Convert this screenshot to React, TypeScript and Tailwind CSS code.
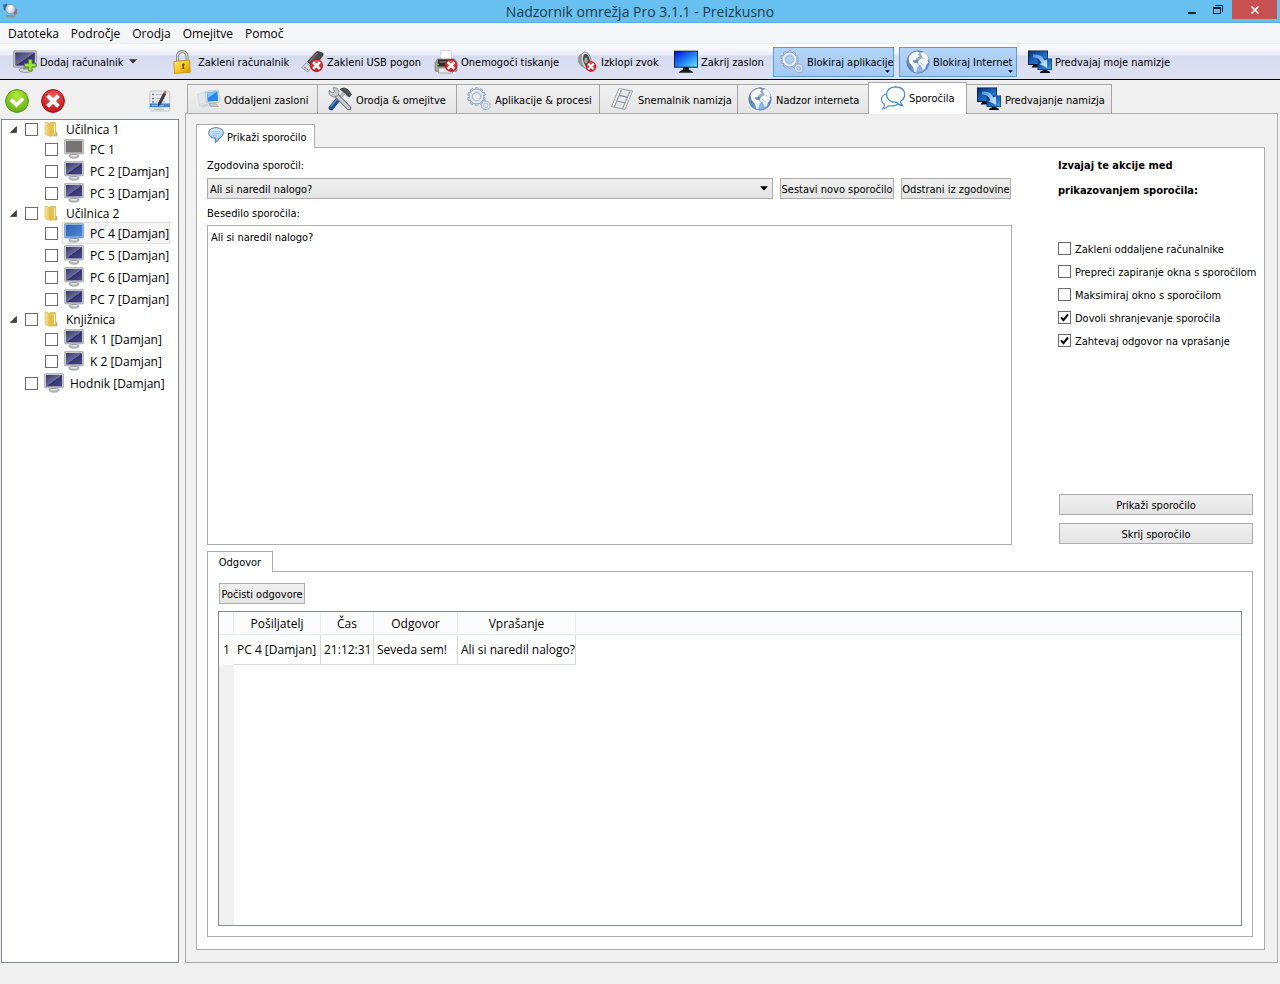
import React from "react";

const UI = "font-['DejaVu_Sans_Condensed','Noto_Sans',sans-serif]";

type IconProps = { className?: string };

function Defs() {
  return (
    <svg className="absolute h-0 w-0" aria-hidden="true">
      <defs>
        <linearGradient id="screenNavy" x1="0" y1="0" x2="1" y2="1">
          <stop offset="0" stopColor="#3b3a66" />
          <stop offset=".5" stopColor="#6a6a9c" />
          <stop offset=".52" stopColor="#34336a" />
          <stop offset="1" stopColor="#4b4a8c" />
        </linearGradient>
        <linearGradient id="screenBlue" x1="0" y1="0" x2="1" y2="1">
          <stop offset="0" stopColor="#2f5fb4" />
          <stop offset="1" stopColor="#4f8ad6" />
        </linearGradient>
        <linearGradient id="screenBright" x1="0" y1="0" x2="1" y2="1">
          <stop offset="0" stopColor="#0410d8" />
          <stop offset=".5" stopColor="#1f7cf4" />
          <stop offset="1" stopColor="#5fe6ff" />
        </linearGradient>
        <linearGradient id="screenDeep" x1="0" y1="0" x2="1" y2="1">
          <stop offset="0" stopColor="#0a2f70" />
          <stop offset=".6" stopColor="#1f6fc8" />
          <stop offset="1" stopColor="#4aa6ee" />
        </linearGradient>
        <linearGradient id="arrowGlow" x1="0" y1="0" x2="1" y2="1">
          <stop offset="0" stopColor="#4d95dd" />
          <stop offset="1" stopColor="#d4edff" />
        </linearGradient>
        <linearGradient id="folder" x1="0" y1="0" x2="1" y2="0">
          <stop offset="0" stopColor="#f8e9a0" />
          <stop offset="1" stopColor="#dfb93c" />
        </linearGradient>
        <linearGradient id="gold" x1="0" y1="0" x2="1" y2="1">
          <stop offset="0" stopColor="#ffe98a" />
          <stop offset=".5" stopColor="#fbc81e" />
          <stop offset="1" stopColor="#d98f00" />
        </linearGradient>
        <radialGradient id="redBall" cx=".5" cy=".3" r=".75">
          <stop offset="0" stopColor="#f25a5a" />
          <stop offset="1" stopColor="#b80f14" />
        </radialGradient>
        <radialGradient id="greenBall" cx=".5" cy=".3" r=".75">
          <stop offset="0" stopColor="#b4e83e" />
          <stop offset="1" stopColor="#5fae10" />
        </radialGradient>
        <radialGradient id="globe" cx=".55" cy=".85" r=".9">
          <stop offset="0" stopColor="#8fc0f0" />
          <stop offset=".5" stopColor="#5585bd" />
          <stop offset="1" stopColor="#76879f" />
        </radialGradient>
        <linearGradient id="land" x1="0" y1="0" x2="1" y2="1">
          <stop offset="0" stopColor="#dfe3e9" />
          <stop offset=".5" stopColor="#ffffff" />
          <stop offset="1" stopColor="#c8dcf2" />
        </linearGradient>
        <linearGradient id="bubble" x1="0" y1="0" x2="0" y2="1">
          <stop offset="0" stopColor="#eaf4ff" />
          <stop offset="1" stopColor="#8dbcf0" />
        </linearGradient>
      </defs>
    </svg>
  );
}

function Monitor({ className, tone = "navy" }: IconProps & { tone?: "navy" | "gray" | "blue" }) {
  const fill = tone === "gray" ? "#767370" : tone === "blue" ? "url(#screenBlue)" : "url(#screenNavy)";
  return (
    <svg className={className} viewBox="0 0 20 20" aria-hidden="true">
      <ellipse cx="10" cy="17" rx="5" ry="2.2" fill="#b9bcbc" stroke="#8b9090" strokeWidth=".6" />
      <ellipse cx="10" cy="16.4" rx="3" ry="1" fill="#e8eaea" />
      <path d="M8 13h4v3H8z" fill="#8b9292" />
      <rect x=".5" y=".5" width="19" height="14.4" rx="1" fill={tone === "blue" ? "#8fb2dd" : "#c4c6ca"} stroke={tone === "blue" ? "#6f98cc" : "#a5a8ac"} strokeWidth=".7" />
      <rect x="2" y="2" width="16" height="11.4" fill={fill} />
    </svg>
  );
}

function RedX({ x, y, r }: { x: number; y: number; r: number }) {
  const k = r * 0.4;
  return (
    <g>
      <circle cx={x} cy={y} r={r} fill="url(#redBall)" stroke="#a01216" strokeWidth=".6" />
      <path d={`M${x - k} ${y - k}L${x + k} ${y + k}M${x + k} ${y - k}L${x - k} ${y + k}`} stroke="#fff" strokeWidth={r * 0.42} strokeLinecap="square" />
    </g>
  );
}

function AddMonitor({ className }: IconProps) {
  return (
    <svg className={className} viewBox="0 0 24 24" aria-hidden="true">
      <ellipse cx="13" cy="20" rx="7" ry="2.4" fill="#d5d8da" stroke="#7d8486" strokeWidth=".8" />
      <rect x="10" y="16" width="5" height="3.5" fill="#868d90" />
      <rect x=".6" y=".8" width="22.8" height="16.4" rx="1" fill="#c6c9ce" stroke="#8d9196" strokeWidth=".8" />
      <rect x="2.2" y="2.4" width="19.600" height="13.2" fill="url(#screenNavy)" />
      <path d="M15.600 9.500h3.400v4h4v3.400h-4v4h-3.400v-4h-4v-3.400h4z" fill="#9fe03a" stroke="#4c8c10" strokeWidth=".8" />
    </svg>
  );
}

function Padlock({ className }: IconProps) {
  return (
    <svg className={className} viewBox="0 0 24 24" aria-hidden="true">
      <path d="M6.500 12V6.500a4.800 4.800 0 0 1 9.600-.3V12" fill="none" stroke="#7e7e78" strokeWidth="3" />
      <path d="M6.500 12V6.500a4.800 4.800 0 0 1 9.600-.3V12" fill="none" stroke="#dededa" strokeWidth="1.300" />
      <path d="M2.800 11.500L18.500 10l.8 12.300-15.700 1.100z" fill="url(#gold)" stroke="#c08a10" strokeWidth=".8" />
      <circle cx="12.300" cy="14.800" r="1.300" fill="#6a4700" />
      <path d="M11.700 15.500h1.200l.3 3.500h-1.800z" fill="#6a4700" />
    </svg>
  );
}

function UsbBlock({ className }: IconProps) {
  return (
    <svg className={className} viewBox="0 0 24 24" aria-hidden="true">
      <path d="M7.500 11.500L16 2.200q1-1 2.500-.6l3.800 1.200q1.400.8.7 2.500L13.500 18z" fill="#4a4a4d" stroke="#222" strokeWidth=".6" />
      <path d="M9 12l8.500-9" stroke="#77777b" strokeWidth="1.200" />
      <path d="M6.200 12.800l5.600 4.500-4 4.600-6-4.200z" fill="#d9dcde" stroke="#86898c" strokeWidth=".8" />
      <path d="M4.300 17l1.500 1.100M6.700 18.800l1.200.9" stroke="#555" strokeWidth="1" />
      <RedX x={16.500} y={15.500} r={6.200} />
    </svg>
  );
}

function PrinterBlock({ className }: IconProps) {
  return (
    <svg className={className} viewBox="0 0 24 24" aria-hidden="true">
      <path d="M7 .5h10l.6 9H6.400z" fill="#fff" stroke="#c2c2c2" strokeWidth=".7" />
      <path d="M3.500 9h17L23 12.500V20q0 1.500-1.500 1.500H2.500Q1 21.500 1 20v-7.500z" fill="#a3a5a2" stroke="#666" strokeWidth=".6" />
      <path d="M4 9.500h16v7H3.500z" fill="#2e2e2e" />
      <path d="M5.500 12h11" stroke="#888" strokeWidth="1.200" />
      <path d="M4.500 18h14v5h-14z" fill="#e8e8e8" stroke="#777" strokeWidth=".6" />
      <path d="M2 14.500h3" stroke="#89c42f" strokeWidth="1.200" />
      <RedX x={17} y={15.500} r={6} />
    </svg>
  );
}

function SpeakerBlock({ className }: IconProps) {
  return (
    <svg className={className} viewBox="0 0 24 24" aria-hidden="true">
      <path d="M10 2.500L5.500 5.500Q2.500 11 7 15.500L13 19z" fill="#9a9a9a" stroke="#707070" strokeWidth=".6" />
      <ellipse cx="12.200" cy="10.500" rx="5" ry="8.600" transform="rotate(-12 12 10.500)" fill="#d4d4d4" stroke="#8c8c8c" strokeWidth=".8" />
      <ellipse cx="12.600" cy="10.500" rx="3.400" ry="6.500" transform="rotate(-12 12 10.500)" fill="#4a4a4d" />
      <ellipse cx="12" cy="10.500" rx="1.700" ry="3" fill="#a5a5a9" />
      <RedX x={17} y={16.500} r={5} />
    </svg>
  );
}

function BrightMonitor({ className }: IconProps) {
  return (
    <svg className={className} viewBox="0 0 24 24" aria-hidden="true">
      <path d="M9.500 17h5l.7 2.500 3.800 2.500v.7H5v-.7l3.800-2.500z" fill="#1b1b1f" />
      <rect x="0" y=".7" width="24" height="17" fill="#16161c" />
      <rect x=".8" y="1.500" width="22.400" height="15.200" fill="url(#screenBright)" />
    </svg>
  );
}

function Cog({ x, y, r }: { x: number; y: number; r: number }) {
  const teeth = Array.from({ length: 10 }, (_, i) => i * 36);
  return (
    <g transform={`translate(${x} ${y}) scale(${r / 8})`}>
      <g fill="#dfe8f1" stroke="#8aa0b8" strokeWidth=".9">
        {teeth.map((a) => (
          <rect key={a} x="-1.300" y="-8.300" width="2.600" height="3.500" rx=".6" transform={`rotate(${a})`} />
        ))}
      </g>
      <circle r="5.300" fill="none" stroke="#8aa0b8" strokeWidth="3.800" />
      <circle r="5.300" fill="none" stroke="#e3ebf3" strokeWidth="2.600" />
      <circle r="4.300" fill="none" stroke="#b7c6d6" strokeWidth=".8" />
    </g>
  );
}

function Gears({ className }: IconProps) {
  return (
    <svg className={className} viewBox="0 0 24 24" aria-hidden="true">
      <Cog x={9.500} y={9.500} r={8.500} />
      <Cog x={18.800} y={18.300} r={4.600} />
    </svg>
  );
}

function Globe({ className }: IconProps) {
  return (
    <svg className={className} viewBox="0 0 24 24" aria-hidden="true">
      <circle cx="12" cy="12" r="11.200" fill="url(#globe)" stroke="#6b7c96" strokeWidth=".7" />
      <path d="M2.500 8Q5 2.500 11 1.500l2.500 1-1.500 2 1.500 2-3 1.500-.5 2-3 .5.500 2 3.500.500 2 2.500-2 3-.500 4-2-.500-1.500-5-3.500-4z" fill="url(#land)" />
      <path d="M14.500 3l3-1q4 2.200 5.300 7l-1.300 1 1 2.500-2.500 3-1 3.500-2.500 1-1.500-4.500-2.500-1-.500-3 2-2.500 2.500-.500-.500-2z" fill="url(#land)" />
      <path d="M14 12q1.500 2.500 4 3M16 7l3.500 2.500" stroke="#a5c2e2" strokeWidth=".9" fill="none" />
      <ellipse cx="11" cy="6" rx="8" ry="4.300" fill="#fff" fillOpacity=".3" />
    </svg>
  );
}

function DualScreens({ className }: IconProps) {
  return (
    <svg className={className} viewBox="0 0 24 24" aria-hidden="true">
      <path d="M6 14h4v3.500H3.500zM15 19h4l.5 1.800 2.500 1V23H12v-1.200l2.500-1z" fill="#0c0f18" />
      <rect x="0" y=".5" width="20" height="14.500" fill="#0b1530" />
      <rect x=".7" y="1.200" width="18.600" height="12.800" fill="url(#screenDeep)" />
      <rect x="9.500" y="8.500" width="14.500" height="11.500" fill="#123a78" />
      <rect x="10.200" y="9.200" width="13.100" height="10" fill="url(#screenDeep)" />
      <path d="M5 4.500Q13.500 3.500 16.500 10.500l2.600-1.300v8.600l-7.600-3.500 2-1.200Q11 7 5 7.500z" fill="url(#arrowGlow)" />
    </svg>
  );
}

function RemoteScreens({ className }: IconProps) {
  return (
    <svg className={className} viewBox="0 0 24 24" aria-hidden="true">
      <path d="M1.500 7.500L9.500 5l2.500 9.500-8.500 3z" fill="#e3e5e8" stroke="#cfd2d6" strokeWidth=".7" />
      <path d="M2.500 18.500l8-2 3 2.500-6.500 1.800z" fill="#d3d6d9" />
      <path d="M9.500 4.500L22.500 3l.7 12-12.700 1z" fill="#e8ecf0" stroke="#b3b9c0" strokeWidth=".7" />
      <path d="M10.800 5.500L21.500 4.200l.5 9.500-10.300 1z" fill="#2489ea" />
      <path d="M10.800 5.500L21.500 4.200 12 11z" fill="#7cc4fa" />
      <path d="M13 16.500h7l2.500 3h-8z" fill="#c3c8ce" stroke="#959ca4" strokeWidth=".6" />
    </svg>
  );
}

function Tools({ className }: IconProps) {
  return (
    <svg className={className} viewBox="0 0 24 24" aria-hidden="true">
      <path d="M10 12.500L3.200 20.800" stroke="#1f4c87" strokeWidth="5" strokeLinecap="round" />
      <path d="M17 5L9.500 13" stroke="#80868c" strokeWidth="3" />
      <path d="M17 5L9.500 13" stroke="#d2d7da" strokeWidth="1.400" />
      <path d="M3 19.500L9 12.300" stroke="#5b8fd0" strokeWidth="1.400" />
      <path d="M12 2.200Q16-.5 20 2.500l3.500 5-2 2.500-2.700-1.500-1-2.300L15.500 5z" fill="#4e5257" stroke="#26282a" strokeWidth=".6" />
      <path d="M9 9l12 12" stroke="#6a7075" strokeWidth="4.600" strokeLinecap="round" />
      <path d="M8 8l12.700 12.700" stroke="#ccd1d4" strokeWidth="2.800" strokeLinecap="round" />
      <path d="M1 3.500l4 2.500 1.500-1.500L5 .8Q9.500 0 11 4q.7 3-1.500 4.800Q6.500 11 3.200 9 .3 7 1 3.500z" fill="#c6ccce" stroke="#73797d" strokeWidth=".8" />
    </svg>
  );
}

function FilmStrip({ className }: IconProps) {
  return (
    <svg className={className} viewBox="0 0 24 24" aria-hidden="true">
      <path d="M9 1.500L22.500 4 15 22.500 1.500 19.500z" fill="#e6e8ec" stroke="#9a9da5" strokeWidth="1" />
      <path d="M11.500 2.500L4.500 19.500M20 4.500L12.700 21.200" stroke="#9a9da5" strokeWidth="1.200" />
      <path d="M10.200 2L3 19.200M21.300 4.500L14 21.500" stroke="#fafafb" strokeWidth="1.200" strokeDasharray="1.200 1.400" />
      <path d="M9.200 8.300l8.800 2M6.800 14l8.700 2" stroke="#858a94" strokeWidth="1.200" />
    </svg>
  );
}

function Bubbles({ className }: IconProps) {
  return (
    <svg className={className} viewBox="0 0 24 24" aria-hidden="true">
      <path d="M6 7.500Q.5 9.300.5 13.500q0 3 3 5Q3.300 21 1.800 22.800q3.700-.5 5.700-3 7 .8 10.500-2.600" fill="#fff" stroke="#5591cc" strokeWidth="1.200" />
      <path d="M14.500.8q9 .3 9.200 7.700-.1 4.500-4.200 6.700.2 2.500 2 4.500-3.800-.3-5.800-3.400Q6 16.300 5.500 8.500 6 1.300 14.500.8z" fill="#fff" stroke="#4288cf" strokeWidth="1.300" />
    </svg>
  );
}

function Bubble({ className }: IconProps) {
  return (
    <svg className={className} viewBox="0 0 16 16" aria-hidden="true">
      <path d="M8 .7q7 .2 7.300 5.300Q15 10 11.500 11q-.8 3-4.300 4.500.8-2 .3-4.200Q.8 10.800.7 6 1 .9 8 .7z" fill="url(#bubble)" stroke="#4674a8" strokeWidth="1" />
      <path d="M4 4.500h8M4 6.500h8M4 8.500h5" stroke="#9dbbdc" strokeWidth=".8" />
    </svg>
  );
}

function FolderIcon({ className }: IconProps) {
  return (
    <svg className={className} viewBox="0 0 14 16" aria-hidden="true">
      <path d="M6 1.500h5.500v10H13V15H6z" fill="#e3c254" stroke="#cfae48" strokeWidth=".6" />
      <path d="M10.500 3v10" stroke="#f7eab4" strokeWidth="1" />
      <path d="M1 .8l5.500 1.700V15.500L1 13.800z" fill="url(#folder)" stroke="#d8bc62" strokeWidth=".6" />
      <path d="M12.500 11.500v3" stroke="#7fb0d8" strokeWidth="1" />
    </svg>
  );
}

function NotesIcon({ className }: IconProps) {
  return (
    <svg className={className} viewBox="0 0 22 22" aria-hidden="true">
      <rect x=".8" y="1" width="20" height="20" rx="2" fill="#e9ebee" stroke="#b9bdc3" strokeWidth=".8" />
      <path d="M3 4.500h2M3 8.500h2M3 12h2" stroke="#767c86" strokeWidth="1.600" />
      <path d="M7 4.500h8M7 8.500h9M7 12h9" stroke="#b5bac2" strokeWidth="1" />
      <path d="M.8 13.500h20v3.700H.8z" fill="#3f82cc" />
      <path d="M3 15.400h12" stroke="#9cc4f2" strokeWidth="1" />
      <path d="M5 19.200h10" stroke="#9aa0a8" strokeWidth=".8" />
      <path d="M14.500 3l2.300 1-5 10-2.600 2 .4-3.500z" fill="#3a3c40" stroke="#1e1f22" strokeWidth=".4" />
      <path d="M14.500 3l.8-2q1.500-.5 2.300.8L16.800 4z" fill="#dc5a50" />
    </svg>
  );
}

function CaretDown({ className }: IconProps) {
  return (
    <svg className={className} viewBox="0 0 8 5" aria-hidden="true">
      <path d="M0 .3h8L4 4.600z" fill="currentColor" />
    </svg>
  );
}

const toolbar = [
  { label: "Dodaj računalnik", width: "w-[158px]", Icon: AddMonitor, menu: "side" },
  { label: "Zakleni računalnik", width: "w-[129px]", Icon: Padlock },
  { label: "Zakleni USB pogon", width: "w-[134px]", Icon: UsbBlock },
  { label: "Onemogoči tiskanje", width: "w-[140px]", Icon: PrinterBlock },
  { label: "Izklopi zvok", width: "w-[100px]", Icon: SpeakerBlock },
  { label: "Zakrij zaslon", width: "w-[106px]", Icon: BrightMonitor },
  { label: "Blokiraj aplikacije", width: "mr-[5px] w-[121px]", Icon: Gears, menu: "corner" },
  { label: "Blokiraj Internet", width: "mr-1 w-[118px]", Icon: Globe, menu: "corner" },
  { label: "Predvajaj moje namizje", width: "w-[160px]", Icon: DualScreens },
];

const tabs = [
  { label: "Oddaljeni zasloni", width: "w-[131px]", Icon: RemoteScreens },
  { label: "Orodja & omejitve", width: "w-[139px]", Icon: Tools },
  { label: "Aplikacije & procesi", width: "w-[143px]", Icon: Gears },
  { label: "Snemalnik namizja", width: "w-[138px]", Icon: FilmStrip },
  { label: "Nadzor interneta", width: "w-[131px]", Icon: Globe },
  { label: "Sporočila", width: "w-[99px]", Icon: Bubbles, selected: true },
  { label: "Predvajanje namizja", width: "w-[145px]", Icon: DualScreens },
];

type Pc = { name: string; tone?: "navy" | "gray" | "blue"; selected?: boolean };
const groups: { name: string; items: Pc[] }[] = [
  { name: "Učilnica 1", items: [{ name: "PC 1", tone: "gray" }, { name: "PC 2 [Damjan]" }, { name: "PC 3 [Damjan]" }] },
  {
    name: "Učilnica 2",
    items: [
      { name: "PC 4 [Damjan]", tone: "blue", selected: true },
      { name: "PC 5 [Damjan]" },
      { name: "PC 6 [Damjan]" },
      { name: "PC 7 [Damjan]" },
    ],
  },
  { name: "Knjižnica", items: [{ name: "K 1 [Damjan]" }, { name: "K 2 [Damjan]" }] },
];

const options = [
  { label: "Zakleni oddaljene računalnike", checked: false },
  { label: "Prepreči zapiranje okna s sporočilom", checked: false },
  { label: "Maksimiraj okno s sporočilom", checked: false },
  { label: "Dovoli shranjevanje sporočila", checked: true },
  { label: "Zahtevaj odgovor na vprašanje", checked: true },
];

function CheckBox({ id, checked = false }: { id: string; checked?: boolean }) {
  return (
    <span className="grid shrink-0">
      <input
        id={id}
        type="checkbox"
        defaultChecked={checked}
        className="peer col-start-1 row-start-1 size-[13px] appearance-none border border-[#6b6b6b] bg-white"
      />
      <svg className="pointer-events-none col-start-1 row-start-1 size-[13px] opacity-0 peer-checked:opacity-100" viewBox="0 0 13 13" aria-hidden="true">
        <path d="M3 6.300l2.500 2.900L10 3.300" fill="none" stroke="#000" strokeWidth="2" />
      </svg>
    </span>
  );
}

function PushButton({ children, className = "" }: { children: React.ReactNode; className?: string }) {
  return (
    <button className={`h-[21px] border border-[#acacac] bg-linear-to-b from-[#f0f0f0] to-[#e4e4e4] pt-0.5 text-center whitespace-nowrap ${className}`}>
      {children}
    </button>
  );
}

function PcRow({ pc, indent }: { pc: Pc; indent: string }) {
  const id = `pc-${pc.name}`;
  return (
    <li className={`flex h-[22px] items-center ${indent}`}>
      <CheckBox id={id} />
      <label
        htmlFor={id}
        className={`ml-1 flex h-[22px] items-center gap-1.5 border pl-px ${pc.selected ? "border-[#dedede] bg-[#f6f6f6]" : "border-transparent"}`}
      >
        <Monitor className="size-5" tone={pc.tone} />
        <span className="pt-0.5">{pc.name}</span>
      </label>
    </li>
  );
}

export default function App() {
  return (
    <div className={`flex min-h-screen flex-col bg-[#f0f0f0] text-[11px] leading-4 text-black ${UI}`}>
      <Defs />
      <header className="font-['Open_Sans',sans-serif] text-xs">
        <div className="flex h-[23px] items-start border-b border-[#5aaedd] bg-[#68c0f0]">
          <div className="w-32 pt-[3px] pl-[3px]">
            <svg className="size-[15px]" viewBox="0 0 15 15" aria-hidden="true">
              <path d="M0 1.500l4-1 1 6-4 1z" fill="#3b6d9c" />
              <path d="M10 5l4 1v5l-3 1z" fill="#b8607a" />
              <circle cx="7.500" cy="6" r="4.800" fill="#c9d8e8" stroke="#6f8bab" strokeWidth=".8" />
              <path d="M5 4l3-2 2 2-2 4-2 1z" fill="#fff" />
              <path d="M3.500 12h8l1.500 2.500H2.500z" fill="#8d96a2" />
            </svg>
          </div>
          <h1 className="flex-1 text-center text-sm leading-6 text-[#1c3a4c]">Nadzornik omrežja Pro 3.1.1 - Preizkusno</h1>
          <div className="flex h-[19px] w-32 justify-end">
            <button aria-label="Minimiraj" className="grid w-[26px] place-items-center">
              <svg className="size-3" viewBox="0 0 12 12" aria-hidden="true">
                <path d="M2 8h8v2H2z" fill="#12242e" />
              </svg>
            </button>
            <button aria-label="Obnovi" className="grid w-[27px] place-items-center">
              <svg className="size-3" viewBox="0 0 12 12" shapeRendering="crispEdges" aria-hidden="true">
                <path d="M.5 3.500h7v6h-7z" fill="none" stroke="#12242e" />
                <path d="M0 3h8v2H0z" fill="#12242e" />
                <path d="M2 1.500h7.500V8" fill="none" stroke="#12242e" />
              </svg>
            </button>
            <button aria-label="Zapri" className="grid w-[45px] place-items-center bg-[#c75050]">
              <svg className="size-2.5" viewBox="0 0 10 10" aria-hidden="true">
                <path d="M1.500 1.500l7 7M8.500 1.500l-7 7" stroke="#fff" strokeWidth="1.700" />
              </svg>
            </button>
            <div className="w-[3px]" />
          </div>
        </div>
        <nav className="flex h-5 items-center gap-3 bg-[#f5f6f7] px-2 pt-0.5">
          {["Datoteka", "Področje", "Orodja", "Omejitve", "Pomoč"].map((m) => (
            <button key={m}>{m}</button>
          ))}
        </nav>
      </header>

      <div
        role="toolbar"
        className="flex h-[37px] items-center border-t border-b border-t-[#ebebeb] border-b-black bg-[linear-gradient(to_bottom,#ffffff_0%,#e9ebf6_32%,#d5daee_34%,#dfe2f3_100%)] pl-1.5"
      >
        {toolbar.map(({ label, width, Icon, menu }) => (
          <button
            key={label}
            className={`relative flex h-[30px] shrink-0 items-center gap-[3px] border pl-1.5 whitespace-nowrap ${width} ${
              menu === "corner" ? "border-[#5c9ad4] bg-linear-to-b from-[#b3d4f8] to-[#a3c9f4]" : "border-transparent"
            }`}
          >
            <Icon className="size-6 shrink-0" />
            <span className="pt-[3px]">{label}</span>
            {menu === "side" && <CaretDown className="ml-0.5 h-[5px] w-2 text-[#333]" />}
            {menu === "corner" && <CaretDown className="absolute right-[3px] bottom-[3px] h-[3px] w-[5px]" />}
          </button>
        ))}
      </div>

      <div className="flex flex-1">
        <aside className="mb-[21px] ml-px flex w-[178px] flex-col">
          <div className="flex h-[39px] items-center pt-0.5 pr-2 pl-1">
            <button aria-label="Izberi vse">
              <svg className="size-6" viewBox="0 0 24 24" aria-hidden="true">
                <circle cx="12" cy="12" r="11.400" fill="url(#greenBall)" stroke="#4f9a12" strokeWidth="1" />
                <path d="M6 10.500l5.500 5.500L18 9.500" fill="none" stroke="#fff" strokeWidth="3.600" />
              </svg>
            </button>
            <button aria-label="Počisti izbor" className="ml-3">
              <svg className="size-6" viewBox="0 0 24 24" aria-hidden="true">
                <circle cx="12" cy="12" r="11.400" fill="url(#redBall)" stroke="#a01216" strokeWidth="1" />
                <path d="M8 8l8 8M16 8l-8 8" stroke="#fff" strokeWidth="4" strokeLinecap="square" />
              </svg>
            </button>
            <button aria-label="Uredi seznam" className="ml-auto">
              <NotesIcon className="size-[22px]" />
            </button>
          </div>
          <ul className="flex-1 border border-[#828790] bg-white font-['Open_Sans',sans-serif] text-xs leading-4">
            {groups.map((g) => (
              <li key={g.name}>
                <div className="flex h-[18px] items-center pl-2">
                  <svg className="size-[7px]" viewBox="0 0 7 7" aria-hidden="true">
                    <path d="M6.500.5v6h-6z" fill="#404040" stroke="#222" strokeWidth=".6" />
                  </svg>
                  <span className="ml-2">
                    <CheckBox id={`group-${g.name}`} />
                  </span>
                  <label htmlFor={`group-${g.name}`} className="ml-1.5 flex items-center gap-2">
                    <FolderIcon className="h-4 w-3.5" />
                    <span className="pt-0.5">{g.name}</span>
                  </label>
                </div>
                <ul>
                  {g.items.map((pc) => (
                    <PcRow key={pc.name} pc={pc} indent="pl-[43px]" />
                  ))}
                </ul>
              </li>
            ))}
            <PcRow pc={{ name: "Hodnik [Damjan]" }} indent="pl-[23px]" />
          </ul>
        </aside>

        <main className="mr-0.5 mb-[21px] ml-1.5 flex flex-1 flex-col">
          <div role="tablist" className="flex h-[33px] items-end pl-0.5">
            {tabs.map(({ label, width, Icon, selected }) => (
              <button
                key={label}
                role="tab"
                aria-selected={!!selected}
                className={`flex shrink-0 items-center gap-1 border-t border-r border-[#a5a5a5] whitespace-nowrap first:border-l first:pl-2 ${width} ${
                  selected ? "relative -mb-px -ml-px h-8 border-l bg-white pb-0.5 pl-3" : "h-[29px] bg-linear-to-b from-[#f0f0f0] to-[#e5e5e5] pl-2.5"
                }`}
              >
                <Icon className="size-6 shrink-0" />
                <span className="pt-[3px]">{label}</span>
              </button>
            ))}
          </div>
          <div className="flex flex-1 flex-col border border-[#acacac] pt-2.5 pr-3 pb-3 pl-2.5">
            <button role="tab" aria-selected="true" className="relative -mb-px flex h-6 w-[119px] items-center gap-[3px] border border-b-0 border-[#acacac] bg-white pl-[11px] whitespace-nowrap">
              <Bubble className="mb-1 size-4" />
              <span className="pt-0.5">Prikaži sporočilo</span>
            </button>
            <section className="flex flex-1 flex-col border border-[#acacac] bg-white pt-1 pr-[11px] pb-3 pl-2.5">
              <div className="flex">
                <div className="flex flex-1 flex-col pt-1">
                  <label htmlFor="history" className="h-[18px] leading-5">Zgodovina sporočil:</label>
                  <div className="mt-1 flex">
                    <div className="relative flex-1">
                      <select id="history" className="block h-[21px] w-full appearance-none border border-[#acacac] bg-linear-to-b from-[#f0f0f0] to-[#e4e4e4] pt-0.5 pl-0.5">
                        <option>Ali si naredil nalogo?</option>
                      </select>
                      <CaretDown className="pointer-events-none absolute top-2 right-[5px] h-[5px] w-2" />
                    </div>
                    <PushButton className="ml-[7px] w-[114px]">Sestavi novo sporočilo</PushButton>
                    <PushButton className="mr-px ml-[7px] w-[110px]">Odstrani iz zgodovine</PushButton>
                  </div>
                  <label htmlFor="message" className="mt-[5px] h-[18px] leading-5">Besedilo sporočila:</label>
                  <textarea id="message" className="mt-[3px] h-80 resize-none border border-[#acacac] bg-white px-[3px] py-1" defaultValue="Ali si naredil nalogo?" />
                </div>
                <div className="ml-[46px] flex w-[195px] flex-col pt-px pb-px">
                  <h2 className="leading-[25px] font-bold">
                    Izvajaj te akcije med
                    <br />
                    prikazovanjem sporočila:
                  </h2>
                  <div className="mt-[34px]">
                    {options.map((o, i) => (
                      <div key={o.label} className="flex h-[23px] items-center gap-1">
                        <CheckBox id={`option-${i}`} checked={o.checked} />
                        <label htmlFor={`option-${i}`} className="pt-0.5 whitespace-nowrap">{o.label}</label>
                      </div>
                    ))}
                  </div>
                  <div className="mt-auto ml-px flex flex-col gap-2">
                    <PushButton>Prikaži sporočilo</PushButton>
                    <PushButton>Skrij sporočilo</PushButton>
                  </div>
                </div>
              </div>

              <button role="tab" aria-selected="true" className="relative mt-1.5 -mb-px h-[21px] w-[66px] border border-b-0 border-[#acacac] bg-white pt-0.5">
                Odgovor
              </button>
              <section className="flex flex-1 flex-col border border-[#acacac] p-2.5 pt-[11px]">
                <PushButton className="ml-px w-[86px] self-start">Počisti odgovore</PushButton>
                <div className="mt-[7px] flex flex-1 flex-col border border-[#828790] bg-white font-['Open_Sans',sans-serif] text-xs">
                  <table className="w-full table-fixed border-separate border-spacing-0">
                    <thead>
                      <tr className="h-[23px] bg-[#fcfcfc] [&>*]:border-r [&>*]:border-b [&>*]:border-[#e8ecf3] [&>*]:px-0 [&>*]:pt-0.5 [&>*]:pb-0 [&>*]:font-normal">
                        <td className="w-[15px]" />
                        <th className="w-[87px]">Pošiljatelj</th>
                        <th className="w-[53px]">Čas</th>
                        <th className="w-[84px]">Odgovor</th>
                        <th className="w-[118px]">Vprašanje</th>
                        <td className="border-r-0!" />
                      </tr>
                    </thead>
                    <tbody>
                      <tr className="h-[30px] whitespace-nowrap [&>td]:border-r [&>td]:border-b [&>td]:border-[#d8d8d8] [&>td]:py-0 [&>td]:pl-[3px]">
                        <th className="bg-[#fcfcfc] p-0 font-normal">1</th>
                        <td>PC 4 [Damjan]</td>
                        <td>21:12:31</td>
                        <td>Seveda sem!</td>
                        <td>Ali si naredil nalogo?</td>
                        <td className="border-0!" />
                      </tr>
                    </tbody>
                  </table>
                  <div className="w-[15px] flex-1 bg-[#f0f0f0]" />
                </div>
              </section>
            </section>
          </div>
        </main>
      </div>
    </div>
  );
}
